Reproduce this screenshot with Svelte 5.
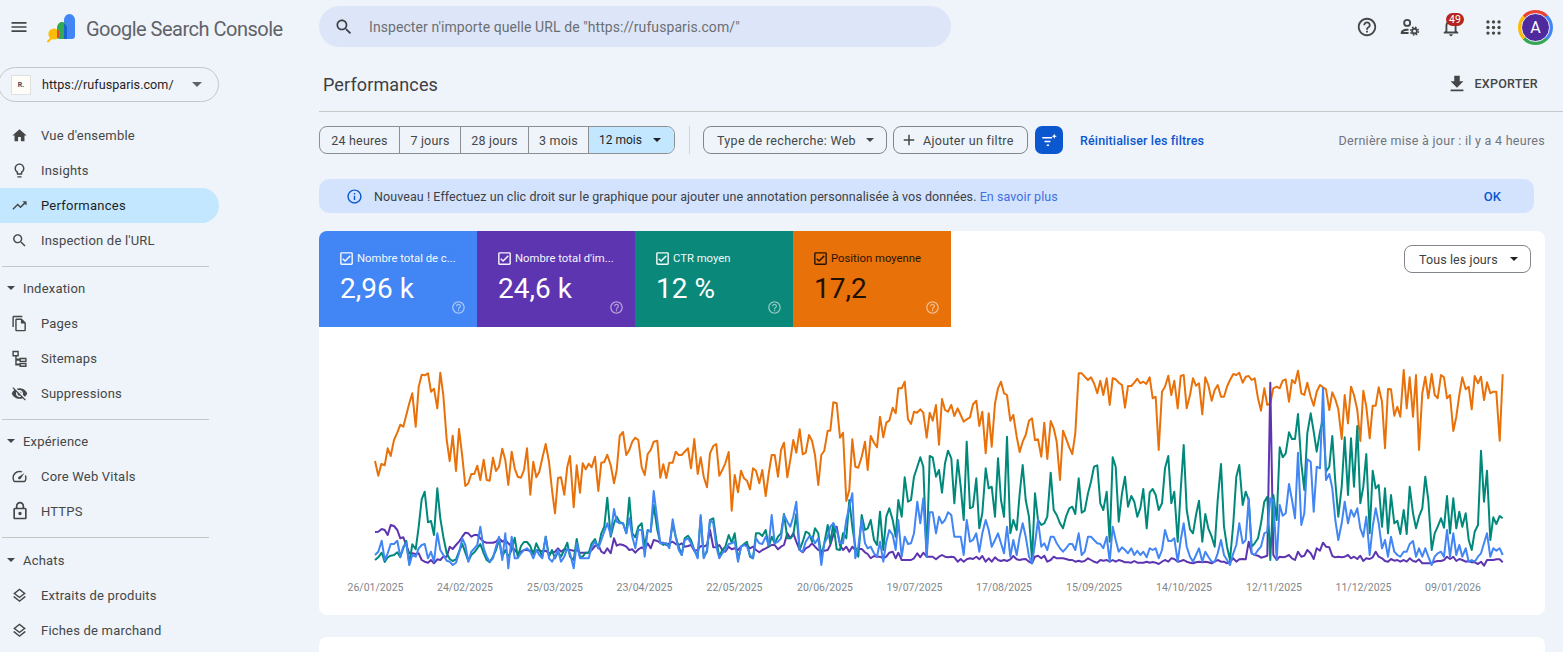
<script>
  const P = {
    orange: [
      `105,303 115,347 124,312 134,316 143,265 152,288 162,240 172,218 181,194 190,200 199,165 208,130 217,100 227,200 236,80 245,44 254,46 264,40 273,95 282,86 292,145 301,38 310,105 320,240 329,303 338,227 348,333 357,207 367,290 376,378 385,370 394,342 403,342 412,317 421,360 431,299 440,360 449,362 459,293 468,333 477,320 487,266 496,300 505,375 515,275 524,325 533,350 543,353 552,330 561,265 571,404 580,305 589,352 598,335 607,295 617,252 627,305 636,390 645,460 654,354 663,352 673,404 682,320 690,288 701,442 710,316 720,398 728,310 737,328 746,311 755,322 765,290 775,393 784,308 793,306 802,284 812,315 822,370 830,330 839,228 849,216 859,285 868,270 877,245 886,233 895,240 905,322 914,345 923,282 932,270 941,245 952,242 961,353 970,313 979,354 988,308 998,308 1007,275 1016,285 1025,285 1034,275 1044,265 1053,325 1063,237 1073,342 1082,292 1091,350 1101,382 1110,280 1120,258 1129,252 1138,347 1147,330 1156,310 1166,276 1175,452 1184,345 1194,397`,
      `33,332 42,355 51,362 60,388 69,325 78,332 88,370 97,330 107,408 116,340 125,285 134,285 144,350 153,270 162,248 172,352 181,300 190,240 199,278 209,208 218,283 227,278 237,225 246,242 255,285 265,375 274,285 283,272 293,212 301,212 310,127 320,130 330,233 339,218 349,423 358,390 367,238 376,320 385,323 395,290 405,245 413,330 422,228 432,248 441,262 450,170 460,232 469,188 478,182 488,143 497,160 505,85 515,85 524,65 534,178 543,192 552,155 562,158 571,148 580,158 590,233 599,158 608,182 618,135 627,254 636,117 645,150 654,155 664,135 673,168 683,145 692,165 701,185 710,178 720,172 729,133 739,122 748,198 757,155 767,280 776,160 785,260 795,130 804,85 813,65 822,100 831,105 841,182 850,165 860,230 869,276 878,245 887,225 897,182 906,175 915,240 924,238 934,290 943,188 952,297 962,183 971,205 980,245 990,360 999,212 1008,235 1018,262 1027,282 1036,220 1046,40 1055,40 1064,50 1074,60 1083,52 1092,70 1102,100 1111,62 1120,105 1130,55 1139,135 1148,55 1157,58 1166,68 1176,75 1185,143 1194,78`,
      `34,78 43,68 52,56 61,70 70,65 79,72 89,52 98,115 107,110 116,270 126,95 135,80 145,47 154,105 163,62 173,145 182,48 191,45 200,145 210,105 219,55 228,77 237,70 247,163 256,52 265,75 275,122 284,90 293,75 303,110 312,110 321,80 330,60 340,42 349,45 358,38 368,68 377,50 386,48 395,60 404,55 414,115 423,152 433,85 442,135 451,130 460,85 470,80 479,85 488,62 497,58 507,125 516,60 525,70 534,32 544,100 553,105 562,68 572,110 581,137 590,95 600,75 609,82 618,88 628,150 637,97 646,118 655,148 665,237 674,105 684,190 693,80 702,105 712,150 721,243 730,92 739,140 749,235 758,137 767,137 776,82 786,125 795,265 804,87 813,88 823,167 832,140 841,170 851,30 860,145 869,52 879,170 888,45 897,270 907,100 916,50 925,115 935,42 944,105 953,115 963,45 972,52 981,115 990,105 1000,213 1009,170 1018,105 1027,52 1037,88 1046,80 1055,148 1064,48 1074,70 1083,50 1092,120 1101,67 1111,100 1120,95 1129,95 1139,242 1148,43`
    ],
    purple: [
      `105,516 115,515 125,507 134,510 143,525 152,495 162,498 172,510 181,535 190,532 199,555 208,580 217,580 227,582 236,580 245,600 254,605 264,608 273,600 282,610 292,598 301,600 310,590 320,590 329,560 338,567 348,555 357,545 367,530 376,518 385,520 394,530 403,525 412,525 421,535 431,545 440,548 449,548 459,548 468,545 477,535 487,545 496,540 505,550 515,560 524,570 533,580 543,575 552,570 561,570 571,572 580,575 589,572 598,570 607,575 617,572 627,580 636,578 645,575 654,565 663,575 673,568 682,570 690,570 701,572 710,570 720,578 728,578 737,578 746,578 755,570 765,558 775,555 784,575 793,580 802,565 812,580 822,535 830,557 839,553 849,555 859,560 868,570 877,568 886,578 895,568 905,562 914,568 923,550 932,565 941,540 952,543 961,548 970,548 979,555 988,550 998,545 1007,552 1016,555 1025,550 1034,560 1044,558 1053,555 1063,572 1073,570 1082,558 1091,560 1101,555 1110,510 1120,562 1129,562 1138,555 1147,570 1156,575 1166,560 1175,568 1184,565 1194,570`,
      `33,560 42,555 51,555 60,565 69,560 78,570 88,577 97,570 107,565 116,560 125,555 134,555 144,568 153,560 162,555 172,520 181,535 190,520 199,545 209,570 218,577 227,565 237,560 246,550 255,560 265,570 274,572 283,572 293,570 301,555 310,525 320,500 330,555 339,570 349,560 358,575 367,560 376,570 385,567 395,567 405,577 413,582 422,595 432,588 441,590 450,590 460,595 469,590 478,578 488,575 497,595 505,578 515,600 524,600 534,600 543,600 552,595 562,580 571,592 580,578 590,590 599,590 608,590 618,598 627,590 636,585 645,590 654,592 664,590 673,592 683,605 692,597 701,605 710,598 720,595 729,597 739,590 748,598 757,588 767,605 776,595 785,605 795,592 804,600 813,603 822,600 831,603 841,598 850,588 860,598 869,600 878,598 887,597 897,605 906,610 915,590 924,587 934,595 943,587 952,605 962,600 971,590 980,595 990,595 999,595 1008,597 1018,600 1027,600 1036,605 1046,602 1055,605 1064,603 1074,595 1083,600 1092,605 1102,608 1111,600 1120,602 1130,600 1139,605 1148,600 1157,605 1166,600 1176,603 1185,607 1194,607`,
      `34,608 43,603 52,608 61,608 70,608 80,605 89,608 98,606 107,608 116,612 126,605 135,600 145,605 154,595 163,597 173,605 182,603 191,600 200,605 210,608 219,610 228,607 237,605 247,607 256,605 265,607 275,610 284,605 293,600 303,605 312,605 321,610 330,605 340,595 349,605 358,598 368,597 377,598 386,545 395,580 404,585 414,587 423,593 433,590 442,587 451,68 460,585 470,600 479,590 488,592 497,590 507,585 516,595 525,600 534,575 544,590 553,587 562,570 572,580 581,597 590,565 600,572 609,548 618,560 628,562 637,588 646,592 655,590 665,592 674,590 684,585 693,595 702,590 712,597 721,587 730,603 739,595 749,597 758,592 767,575 776,590 786,595 795,603 804,605 813,597 823,602 832,600 841,605 851,600 860,605 869,595 879,603 888,605 897,598 907,610 916,610 925,610 935,610 944,605 953,603 963,603 972,600 981,590 990,597 1000,590 1009,603 1018,597 1027,600 1037,605 1046,603 1055,607 1064,607 1074,612 1083,605 1092,617 1101,600 1111,600 1120,600 1129,598 1139,598 1148,607`
    ],
    green: [
      `105,600 115,592 125,578 134,606 143,592 152,587 162,585 172,577 181,592 190,565 199,543 208,612 217,553 227,568 236,500 245,418 254,395 264,487 273,483 282,525 292,385 301,475 310,530 320,580 329,597 338,603 348,598 357,575 367,552 376,578 385,603 394,585 403,577 412,565 421,552 431,580 440,600 449,607 459,590 468,570 477,540 487,590 496,570 505,590 515,570 524,533 533,590 543,558 552,546 561,546 571,558 580,583 589,550 598,570 607,590 617,530 627,590 636,570 645,595 654,575 663,590 673,570 682,548 690,590 701,600 710,537 720,590 728,590 737,578 746,578 755,550 765,537 775,565 784,520 793,500 802,413 812,530 822,490 830,470 839,487 849,490 859,520 868,413 877,520 886,532 895,500 905,490 914,560 923,510 932,515 941,435 952,510 961,548 970,555 979,550 988,560 998,490 1007,530 1016,560 1025,585 1034,535 1044,527 1053,540 1063,570 1073,590 1082,470 1091,590 1101,575 1110,480 1120,475 1129,540 1138,590 1147,570 1156,560 1166,525 1175,548 1184,520 1194,600`,
      `33,560 42,552 51,545 60,590 69,595 78,520 88,520 97,528 107,510 116,560 125,530 134,550 144,530 153,520 162,462 172,535 181,535 190,525 199,462 209,570 218,545 227,515 237,520 246,545 255,505 265,520 274,590 283,550 293,495 301,550 310,490 320,568 330,570 339,520 349,535 358,420 367,500 376,560 385,590 395,465 405,510 413,505 422,480 432,540 441,555 450,455 460,570 469,470 478,445 488,480 497,530 505,420 515,470 524,352 534,425 543,420 552,350 562,320 571,292 580,320 590,590 599,288 608,292 618,350 627,330 636,398 645,310 654,272 664,295 673,430 683,300 692,380 701,480 710,245 720,445 729,440 739,355 748,505 757,460 767,325 776,385 785,380 795,470 804,295 813,420 822,470 831,230 841,520 850,480 860,510 869,400 878,315 887,420 897,470 906,600 915,400 924,480 934,495 943,490 952,470 962,338 971,450 980,465 990,490 999,505 1008,470 1018,445 1027,440 1036,462 1046,355 1055,458 1064,452 1074,400 1083,365 1092,320 1102,316 1111,430 1120,450 1130,395 1139,545 1148,292 1157,320 1166,485 1176,400 1185,350 1194,440`,
      `34,408 43,425 52,470 61,445 70,387 80,505 89,397 98,387 107,405 116,450 126,430 135,325 145,288 154,430 163,395 173,545 182,390 191,255 200,450 210,508 219,520 228,465 237,422 247,545 256,462 265,505 275,530 284,560 293,420 303,312 312,500 321,560 330,600 340,490 349,350 358,315 368,435 377,395 386,420 395,560 404,550 414,535 423,490 433,425 442,410 451,600 460,405 470,480 479,262 488,292 497,280 507,217 516,237 525,237 534,162 544,310 553,390 562,220 572,160 581,215 590,275 600,215 609,175 618,335 628,320 637,228 646,365 655,470 665,380 674,232 684,405 693,235 702,380 712,198 721,430 730,380 739,282 749,520 758,332 767,385 776,375 786,500 795,385 804,520 813,405 823,490 832,482 841,522 851,450 860,522 869,380 879,460 888,505 897,470 907,445 916,350 925,420 935,570 944,520 953,500 963,475 972,503 981,408 990,520 1000,415 1009,505 1018,455 1027,500 1037,460 1046,540 1055,570 1064,515 1074,495 1083,272 1092,425 1101,332 1111,540 1120,472 1129,492 1139,468 1148,475`
    ],
    blue: [
      `105,585 115,575 125,542 134,600 143,580 152,552 162,552 172,542 181,590 190,560 199,550 208,615 217,585 227,590 236,565 245,555 254,552 264,595 273,575 282,605 292,520 301,570 310,585 320,602 329,605 338,615 348,608 357,580 367,535 376,555 385,605 394,575 403,565 412,555 421,500 431,565 440,590 449,605 459,595 468,560 477,530 487,600 496,520 505,625 515,530 524,595 533,595 543,580 552,570 561,565 571,575 580,595 589,570 598,585 607,595 617,530 627,595 636,605 645,590 654,570 663,605 673,590 682,565 690,580 701,625 710,550 720,595 728,595 737,595 746,595 755,560 765,545 775,565 784,540 793,515 802,490 812,525 822,447 830,485 839,490 849,490 859,520 868,475 877,530 886,565 895,510 905,510 914,590 923,510 932,515 941,393 952,480 961,550 970,550 979,550 988,565 998,478 1007,530 1016,570 1025,585 1034,540 1044,535 1053,550 1063,570 1073,595 1082,465 1091,595 1101,570 1110,480 1120,490 1129,560 1138,595 1147,580 1156,570 1166,552 1175,550 1184,545 1194,605`,
      `33,560 42,555 51,560 60,585 69,595 78,535 88,550 97,552 107,530 116,555 125,465 134,550 144,545 153,535 162,465 172,485 181,500 190,470 199,425 209,570 218,575 227,545 237,530 246,530 255,550 265,535 274,615 283,550 293,530 301,500 310,490 320,510 330,550 339,550 349,480 358,440 367,400 376,595 385,560 395,480 405,550 413,565 422,560 432,580 441,590 450,545 460,605 469,545 478,510 488,525 497,570 505,480 515,590 524,530 534,552 543,550 552,520 562,425 571,490 580,415 590,590 599,457 608,457 618,520 627,470 636,490 645,480 654,457 664,465 673,530 683,530 692,530 701,585 710,480 720,545 729,540 739,520 748,575 757,520 767,480 776,510 785,560 795,540 804,520 813,550 822,580 831,500 841,590 850,540 860,585 869,530 878,490 887,530 897,590 906,610 915,550 924,480 934,560 943,550 952,570 962,530 971,530 980,550 990,565 999,575 1008,565 1018,552 1027,552 1036,570 1046,520 1055,585 1064,575 1074,530 1083,530 1092,540 1102,550 1111,552 1120,565 1130,530 1139,605 1148,500 1157,540 1166,575 1176,562 1185,570 1194,580`,
      `34,565 43,585 52,572 61,585 70,575 80,592 89,565 98,570 107,565 116,595 126,570 135,510 145,543 154,543 163,535 173,605 182,540 191,490 200,560 210,590 219,605 228,585 237,565 247,605 256,575 265,590 275,605 284,605 293,580 303,540 312,585 321,600 330,615 340,580 349,555 358,490 368,550 377,540 386,415 395,580 404,585 414,570 423,560 433,520 442,515 451,415 460,420 470,600 479,435 488,467 497,460 507,372 516,420 525,475 534,278 544,495 553,460 562,298 572,305 581,455 590,320 600,325 609,85 618,360 628,342 637,385 646,480 655,540 665,490 674,425 684,490 693,450 702,470 712,445 721,505 730,530 739,470 749,585 758,500 767,445 776,490 786,565 795,540 804,590 813,530 823,575 832,585 841,590 851,575 860,575 869,552 879,543 888,590 897,565 907,590 916,565 925,590 935,615 944,590 953,580 963,575 972,590 981,510 990,590 1000,520 1009,585 1018,555 1027,590 1037,565 1046,605 1055,600 1064,605 1074,590 1083,580 1092,550 1101,520 1111,590 1120,565 1129,572 1139,565 1148,585`
    ]
  };
  const ORIGIN = [340, 730, 1120];
  function line(panels) {
    return panels.map((s, i) => s.split(' ').map((p) => {
      const [x, y] = p.split(',').map(Number);
      return `${(ORIGIN[i] + x / 3).toFixed(1)},${(360 + y / 3).toFixed(1)}`;
    }).join(' ')).join(' ');
  }
  const series = [
    { c: '#e8710a', pts: line(P.orange) },
    { c: '#5e35b1', pts: line(P.purple) },
    { c: '#00897b', pts: line(P.green) },
    { c: '#4285f4', pts: line(P.blue) }
  ];
  const dates = [
    ['26/01/2025', 375.5], ['24/02/2025', 465], ['25/03/2025', 555], ['23/04/2025', 644.5], ['22/05/2025', 734.5],
    ['20/06/2025', 825], ['19/07/2025', 914.5], ['17/08/2025', 1004], ['15/09/2025', 1094], ['14/10/2025', 1184],
    ['12/11/2025', 1274], ['11/12/2025', 1363.5], ['09/01/2026', 1453]
  ];
  const I = {
    search: 'M15.5 14h-.79l-.28-.27C15.41 12.59 16 11.11 16 9.5 16 5.91 13.09 3 9.5 3S3 5.91 3 9.5 5.91 16 9.5 16c1.61 0 3.09-.59 4.23-1.57l.27.28v.79l5 4.99L20.49 19l-4.99-5zm-6 0C7.01 14 5 11.99 5 9.5S7.01 5 9.5 5 14 7.01 14 9.5 11.99 14 9.5 14z',
    home: 'M10 20v-6h4v6h5v-8h3L12 3 2 12h3v8z',
    bulb: 'M9 21c0 .55.45 1 1 1h4c.55 0 1-.45 1-1v-1H9v1zm3-19C8.14 2 5 5.14 5 9c0 2.38 1.19 4.47 3 5.74V17c0 .55.45 1 1 1h6c.55 0 1-.45 1-1v-2.26c1.81-1.27 3-3.36 3-5.74 0-3.86-3.14-7-7-7zm2.85 11.1l-.85.6V16h-4v-2.3l-.85-.6C7.8 12.16 7 10.63 7 9c0-2.76 2.24-5 5-5s5 2.24 5 5c0 1.63-.8 3.16-2.15 4.1z',
    trend: 'M16 6l2.29 2.29-4.88 4.88-4-4L2 16.59 3.41 18l6-6 4 4 6.3-6.29L22 12V6z',
    copy: 'M16 1H4c-1.1 0-2 .9-2 2v14h2V3h12V1zm-1 4H8c-1.1 0-2 .9-2 2v14c0 1.1.9 2 2 2h11c1.1 0 2-.9 2-2V11l-6-6zM8 21V7h6v5h5v9H8z',
    sitemap: 'M2 1h9v8H8v3h4v-1h10v6H12v-2H8v4h4v-1h10v6H12v-2H6V9H2V1zm2 2v4h5V3H4zm10 10v2h6v-2h-6zm0 7v2h6v-2h-6z',
    eyeoff: 'M12 7c2.76 0 5 2.24 5 5 0 .65-.13 1.26-.36 1.83l2.92 2.92c1.51-1.26 2.7-2.89 3.43-4.75-1.73-4.39-6-7.5-11-7.5-1.4 0-2.74.25-3.98.7l2.16 2.16C10.74 7.13 11.35 7 12 7zM2 4.27l2.28 2.28.46.46C3.08 8.3 1.78 10.02 1 12c1.73 4.39 6 7.5 11 7.5 1.55 0 3.03-.3 4.38-.84l.42.42L19.73 22 21 20.73 3.27 3 2 4.27zM7.53 9.8l1.55 1.55c-.05.21-.08.43-.08.65 0 1.66 1.34 3 3 3 .22 0 .44-.03.65-.08l1.55 1.55c-.67.33-1.41.53-2.2.53-2.76 0-5-2.24-5-5 0-.79.2-1.53.53-2.2zm4.31-.78l3.15 3.15.02-.16c0-1.66-1.34-3-3-3l-.17.01z',
    speed: 'M12 4C6.5 4 2 8.5 2 14c0 1.8.5 3.6 1.4 5 .4.6 1 1 1.7 1h13.8c.7 0 1.4-.4 1.7-1 .9-1.4 1.4-3.2 1.4-5 0-1.5-.3-2.9-.9-4.2l-1.6 1.6c.3.8.5 1.7.5 2.6 0 1.4-.4 2.8-1.1 4H5.1C4.400 16.800 4 15.400 4 14c0-4.400 3.600-8 8-8 .9 0 1.800.2 2.600.5l1.600-1.600C14.900 4.300 13.500 4 12 4zm-1.400 11.400c.8.8 2 .8 2.800 0L19 7l-8.400 5.600c-.8.8-.8 2 0 2.800z',
    lock: 'M18 8h-1V6c0-2.76-2.24-5-5-5S7 3.24 7 6v2H6c-1.1 0-2 .9-2 2v10c0 1.1.9 2 2 2h12c1.1 0 2-.9 2-2V10c0-1.1-.9-2-2-2zM9 6c0-1.66 1.34-3 3-3s3 1.34 3 3v2H9V6zm9 14H6V10h12v10zm-6-3c1.1 0 2-.9 2-2s-.9-2-2-2-2 .9-2 2 .9 2 2 2z',
    layers: 'M11.99 18.54l-7.37-5.73L3 14.07l9 7 9-7-1.63-1.27-7.38 5.74zM12 16l7.36-5.73L21 9l-9-7-9 7 1.63 1.27L12 16zm0-11.47L17.74 9 12 13.47 6.26 9 12 4.53z',
    help: 'M11 18h2v-2h-2v2zm1-16C6.48 2 2 6.48 2 12s4.48 10 10 10 10-4.48 10-10S17.52 2 12 2zm0 18c-4.41 0-8-3.59-8-8s3.59-8 8-8 8 3.59 8 8-3.59 8-8 8zm0-14c-2.21 0-4 1.79-4 4h2c0-1.1.9-2 2-2s2 .9 2 2c0 2-3 1.75-3 5h2c0-2.25 3-2.5 3-5 0-2.21-1.79-4-4-4z',
    bell: 'M12 22c1.1 0 2-.9 2-2h-4c0 1.1.9 2 2 2zm6-6v-5c0-3.07-1.63-5.64-4.5-6.32V4c0-.83-.67-1.5-1.5-1.5s-1.5.67-1.5 1.5v.68C7.64 5.36 6 7.92 6 11v5l-2 2v1h16v-1l-2-2zm-2 1H8v-6c0-2.48 1.51-4.5 4-4.5s4 2.02 4 4.5v6z',
    download: 'M19 9h-4V3H9v6H5l7 7 7-7zM5 18v2h14v-2H5z',
    info: 'M11 7h2v2h-2zm0 4h2v6h-2zm1-9C6.48 2 2 6.48 2 12s4.48 10 10 10 10-4.48 10-10S17.52 2 12 2zm0 18c-4.41 0-8-3.59-8-8s3.59-8 8-8 8 3.59 8 8-3.59 8-8 8z',
    add: 'M19 13h-6v6h-2v-6H5v-2h6V5h2v6h6v2z',
    check: 'M19 3H5c-1.1 0-2 .9-2 2v14c0 1.1.9 2 2 2h14c1.1 0 2-.9 2-2V5c0-1.1-.9-2-2-2zm0 16H5V5h14v14zM17.99 9l-1.41-1.42-6.59 6.59-2.58-2.57-1.42 1.41 4 3.99z'
  };
  const nav = [
    { items: [['home', "Vue d'ensemble"], ['bulb', 'Insights'], ['trend', 'Performances', true], ['search', "Inspection de l'URL"]] },
    { title: 'Indexation', items: [['copy', 'Pages'], ['sitemap', 'Sitemaps'], ['eyeoff', 'Suppressions']] },
    { title: 'Expérience', items: [['speed', 'Core Web Vitals'], ['lock', 'HTTPS']] },
    { title: 'Achats', items: [['layers', 'Extraits de produits'], ['layers', 'Fiches de marchand']] }
  ];
  const ranges = ['24 heures', '7 jours', '28 jours', '3 mois'];
  const metrics = [
    { cls: 'm-blue', label: 'Nombre total de c...', value: '2,96 k' },
    { cls: 'm-purple', label: "Nombre total d'im...", value: '24,6 k' },
    { cls: 'm-green', label: 'CTR moyen', value: '12 %' },
    { cls: 'm-orange', label: 'Position moyenne', value: '17,2' }
  ];
</script>

<div class="page">
  <header class="topbar">
    <div class="brand">
      <svg class="menu" viewBox="0 0 24 24"><path d="M3 18h18v-2H3v2zm0-5h18v-2H3v2zm0-7v2h18V6H3z" /></svg>
      <svg class="logo" viewBox="48 13 30 30">
        <path d="M65 20c0-3 2.500-6 5.500-6s5.500 3 5.500 6v16c0 1.700-1.300 3-3 3h-8z" fill="#4285f4" />
        <path d="M58 28c0-3.300 2.200-6 5-6s5 2.700 5 6v11h-7c-1.700 0-3-1.300-3-3z" fill="#34a853" />
        <path d="M65 23.500c1.800 1 3 2.800 3 4.500v11h-3z" fill="#1a66d0" />
        <path d="M49 41.500l4-4" stroke="#fbbc04" stroke-width="1.800" stroke-linecap="round" />
        <circle cx="55" cy="34" r="5.600" fill="#fbbc04" />
        <path d="M58 29.200a5.600 5.600 0 0 1 0 9.600z" fill="#ea4335" />
      </svg>
      <span class="brand-name">Google Search Console</span>
    </div>
    <div class="searchbox">
      <svg viewBox="0 0 24 24"><path d={I.search} /></svg>
      <span>Inspecter n'importe quelle URL de "https://rufusparis.com/"</span>
    </div>
    <div class="tools">
      <svg class="tool" viewBox="0 0 24 24"><path d={I.help} /></svg>
      <svg class="tool" viewBox="0 0 24 24">
        <circle cx="10" cy="7.500" r="3.300" fill="none" stroke="#444746" stroke-width="2" />
        <path d="M3 19.500v-1.300c0-2.600 3.800-4.200 7-4.200.6 0 1.200.1 1.700.2l-.4 2c-.4-.1-.9-.2-1.300-.2-2.600 0-5 1.200-5 2.200v-.7h6.500v2z" />
        <circle cx="18" cy="16.500" r="2.600" fill="none" stroke="#444746" stroke-width="2" />
        <circle cx="18" cy="16.500" r="4.300" fill="none" stroke="#444746" stroke-width="1.500" stroke-dasharray="1.800 1.580" />
      </svg>
      <div class="bellwrap">
        <svg class="tool" viewBox="0 0 24 24"><path d={I.bell} /></svg>
        <span class="badge">49</span>
      </div>
      <svg class="tool apps" viewBox="0 0 24 24">
        {#each [5, 12, 19] as y}{#each [5, 12, 19] as x}<circle cx={x} cy={y} r="2.100" />{/each}{/each}
      </svg>
      <div class="avatar"><span>A</span></div>
    </div>
  </header>

  <div class="layout">
    <aside class="side">
      <div class="property">
        <span class="favicon">R.</span>
        <span class="prop-name">https://rufusparis.com/</span>
        <span class="caret"></span>
      </div>
      <nav class="nav">
        {#each nav as group, g}
          {#if g > 0}<hr class="rule" />{/if}
          {#if group.title}
            <div class="group-title"><span class="caret small"></span>{group.title}</div>
          {/if}
          {#each group.items as item}
            <div class="nav-item" class:active={item[2]}>
              <svg class:big={item[0] === 'lock'} viewBox="0 0 24 24"><path d={I[item[0]]} /></svg>
              <span>{item[1]}</span>
            </div>
          {/each}
        {/each}
      </nav>
    </aside>

    <main class="main">
      <div class="titlebar">
        <h1>Performances</h1>
        <button class="export">
          <svg viewBox="0 0 24 24"><path d={I.download} /></svg>
          EXPORTER
        </button>
      </div>

      <div class="filters">
        <div class="ranges">
          {#each ranges as r}<span class="range">{r}</span>{/each}
          <span class="range selected">12 mois<span class="caret small dark"></span></span>
        </div>
        <span class="vsep"></span>
        <span class="chip type">Type de recherche: Web<span class="caret small grey"></span></span>
        <span class="chip addf">
          <svg viewBox="0 0 24 24"><path d={I.add} /></svg>
          Ajouter un filtre
        </span>
        <span class="spark">
          <svg viewBox="0 0 24 24" fill="#fff">
            <path d="M3 8h13v2H3zM6 13h8v2H6zM9 18h3v2H9z" />
            <path d="M19 3.500l1 2.500 2.500 1-2.500 1-1 2.500-1-2.500-2.500-1 2.500-1z" />
          </svg>
        </span>
        <a class="reset" href="#reset">Réinitialiser les filtres</a>
        <span class="updated">Dernière mise à jour : il y a 4 heures</span>
      </div>

      <div class="banner">
        <svg viewBox="0 0 24 24"><path d={I.info} /></svg>
        <span class="banner-text">Nouveau ! Effectuez un clic droit sur le graphique pour ajouter une annotation personnalisée à vos données. <a href="#more">En savoir plus</a></span>
        <span class="ok">OK</span>
      </div>

      <section class="card chart-card">
        <div class="card-head">
          <div class="metrics">
            {#each metrics as m}
              <div class="metric {m.cls}">
                <div class="metric-label">
                  <svg viewBox="0 0 24 24"><path d={I.check} /></svg>
                  <span>{m.label}</span>
                </div>
                <div class="metric-value">{m.value}</div>
                <svg class="metric-help" viewBox="0 0 24 24"><path d={I.help} /></svg>
              </div>
            {/each}
          </div>
          <span class="chip daily">Tous les jours<span class="caret small dark"></span></span>
        </div>
        <svg class="chart" viewBox="319 327 1226 288">
          {#each series as s}
            <polyline points={s.pts} fill="none" stroke={s.c} stroke-width="2" stroke-linejoin="round" />
          {/each}
          {#each dates as d}
            <text x={d[1]} y="591" text-anchor="middle">{d[0]}</text>
          {/each}
        </svg>
      </section>

      <section class="card next-card"></section>
    </main>
  </div>
</div>

<style>
  :global(body) { margin: 0; background: #eff3fa; }
  * { box-sizing: border-box; }
  .page {
    height: 652px; overflow: hidden; background: #eff3fa; color: #444746;
    font-family: Roboto, "Liberation Sans", sans-serif; font-size: 13px;
  }
  svg { display: block; fill: #444746; flex: none; }
  a { text-decoration: none; }

  .topbar { height: 56px; display: flex; align-items: flex-start; }
  .brand { width: 319px; height: 56px; display: flex; align-items: center; flex: none; }
  .menu { width: 20px; height: 20px; margin-left: 9px; margin-right: 18px; margin-top: -3px; }
  .logo { width: 30px; height: 30px; }
  .brand-name { margin-left: 9px; font-size: 20px; color: #5f6368; letter-spacing: -0.5px; margin-top: 2px; white-space: nowrap; }
  .searchbox {
    width: 632px; height: 41px; margin-top: 6px; border-radius: 21px; background: #dde6f8;
    display: flex; align-items: center; padding-left: 15px; color: #6b6f73; font-size: 14px; letter-spacing: .08px;
  }
  .searchbox svg { width: 20px; height: 20px; margin-right: 15px; fill: #3c4043; }
  .tools { margin-left: auto; display: flex; align-items: center; height: 54px; padding-right: 10px; }
  .tool { width: 22px; height: 22px; }
  .tools > .tool:first-child { margin-right: 20px; }
  .tools > .tool:nth-child(2) { margin-right: 20px; }
  .bellwrap { position: relative; width: 22px; height: 22px; margin-right: 22px; }
  .badge {
    position: absolute; left: 6px; top: -3px; width: 18px; height: 13px; border-radius: 7px;
    background: #b3261e; color: #fff; font-size: 10.500px; line-height: 13px; text-align: center;
  }
  .apps { width: 19px; height: 19px; margin-right: 15px; }
  .avatar {
    width: 35px; height: 35px; border-radius: 50%; padding: 3px;
    background: conic-gradient(#ea4335 0 25%, #4285f4 25% 50%, #34a853 50% 75%, #fbbc04 75% 100%);
    transform: rotate(-45deg) ; display: flex;
  }
  .avatar span {
    flex: 1; border-radius: 50%; background: #4e2a9e; border: 1.500px solid #eff3fa; color: #fff;
    font-size: 16px; display: flex; align-items: center; justify-content: center; transform: rotate(45deg);
  }

  .layout { display: flex; }
  .side { width: 319px; flex: none; padding-top: 11px; }
  .property {
    width: 221px; height: 35px; margin-left: -2px; border: 1px solid #c4c7c5; border-radius: 18px;
    display: flex; align-items: center; padding-left: 12px; color: #1f1f1f;
  }
  .favicon {
    width: 20px; height: 20px; background: #fffdf8; border: 1px solid #e0e0e0; color: #3c4a63;
    font-size: 7px; font-weight: 700; display: flex; align-items: center; justify-content: center; flex: none;
  }
  .prop-name { margin-left: 11px; font-size: 12.600px; letter-spacing: .03px; }
  .caret {
    width: 0; height: 0; border-left: 5px solid transparent; border-right: 5px solid transparent;
    border-top: 5px solid #5f6368; margin-left: auto; margin-right: 16px;
  }
  .caret.small { border-left-width: 4px; border-right-width: 4px; border-top-width: 4px; display: inline-block; vertical-align: middle; }
  .caret.dark { border-top-color: #1f1f1f; }
  .caret.grey { border-top-color: #444746; }

  .nav { margin-top: 15.500px; width: 219px; }
  .nav-item {
    height: 35px; display: flex; align-items: center; padding-left: 11px; border-radius: 0 18px 18px 0;
    color: #444746; letter-spacing: .2px;
  }
  .nav-item svg { width: 17px; height: 17px; margin-right: 13px; }
  .nav-item svg.big { width: 20px; height: 20px; margin-left: -1.500px; margin-right: 11.500px; }
  .nav-item.active { background: #c2e7ff; color: #1f1f1f; letter-spacing: .25px; }
  .group-title { height: 35px; display: flex; align-items: center; padding-left: 7px; letter-spacing: .2px; color: #444746; }
  .group-title .caret { margin: 0 8px 0 0; border-top-color: #444746; }
  .rule { border: 0; height: 1px; background: #c4c7c5; margin: 8px 0 4px 2px; width: 207px; }
  .rule:nth-of-type(3) { margin-bottom: 5px; }

  .main { flex: 1; min-width: 0; padding-right: 18px; }
  .titlebar {
    height: 56px; margin-right: -18px; border-bottom: 1px solid #c7c9cb; padding: 2px 25px 0 4px;
    display: flex; align-items: center; justify-content: space-between;
  }
  h1 { margin: 0; font-size: 18px; font-weight: 400; color: #3c4043; letter-spacing: .13px; }
  .export {
    border: 0; background: none; padding: 0; display: flex; align-items: center; gap: 6.500px; margin-top: -2px;
    font: 500 12.500px Roboto, sans-serif; letter-spacing: .25px; color: #444746;
  }
  .export svg { width: 22px; height: 22px; }

  .filters { display: flex; align-items: center; margin-top: 14px; height: 28px; font-size: 12.500px; }
  .ranges { display: flex; height: 28px; border: 1px solid #8b8f92; border-radius: 8px; overflow: hidden; }
  .range { display: flex; align-items: center; justify-content: center; border-left: 1px solid #8b8f92; color: #444746; letter-spacing: .2px; }
  .range:first-child { border-left: 0; }
  .range:nth-child(1) { width: 79px; }
  .range:nth-child(2) { width: 61px; }
  .range:nth-child(3) { width: 68px; }
  .range:nth-child(4) { width: 60px; }
  .range.selected { width: 86px; background: #c2e7ff; color: #1f1f1f; justify-content: flex-start; padding-left: 10px; font-size: 12px; letter-spacing: 0; }
  .range.selected .caret { margin: 0 0 0 11px; }
  .vsep { width: 1px; height: 28px; background: #d3d6da; margin: 0 13px 0 14px; }
  .chip {
    height: 28px; display: inline-flex; align-items: center; border: 1px solid #80868b; border-radius: 8px;
    color: #444746; letter-spacing: .31px; white-space: nowrap;
  }
  .type { width: 184px; padding-left: 13px; }
  .type .caret { margin: 0 0 0 10px; }
  .addf { width: 135px; margin-left: 6px; padding-left: 6px; }
  .addf svg { width: 18px; height: 18px; margin-right: 5px; }
  .spark { width: 28px; height: 28px; margin-left: 7px; border-radius: 7px; background: #0b57d0; display: flex; align-items: center; justify-content: center; }
  .spark svg { width: 18px; height: 18px; fill: #fff; }
  .reset { margin-left: 17px; color: #0b57d0; font-weight: 500; letter-spacing: .13px; }
  .updated { margin-left: auto; color: #70757a; letter-spacing: .28px; }

  .banner {
    margin-top: 25px; margin-right: 11px; height: 34px; border-radius: 10px; background: #d3e3fd;
    display: flex; align-items: center; padding: 0 33px 0 27px; color: #3c4043;
  }
  .banner svg { width: 17px; height: 17px; fill: #0b57d0; margin-right: 11px; }
  .banner-text { font-size: 12.500px; letter-spacing: .07px; }
  .banner-text a { color: #3f6fe0; }
  .ok { margin-left: auto; color: #0b57d0; font-weight: 500; }

  .card { background: #fff; border-radius: 8px; }
  .chart-card { margin-top: 18px; height: 384px; overflow: hidden; }
  .card-head { display: flex; justify-content: space-between; align-items: flex-start; height: 96px; }
  .metrics { display: flex; }
  .metric { width: 158px; height: 96px; padding: 19px 8px 0 21px; color: #fff; position: relative; }
  .m-blue { background: #4285f4; }
  .m-purple { background: #5e35b1; }
  .m-green { background: #0a897a; }
  .m-orange { background: #e8710a; color: #201000; }
  .metric-label { display: flex; align-items: center; gap: 2.500px; font-size: 11.300px; white-space: nowrap; opacity: .95; }
  .metric-label svg { width: 17px; height: 17px; fill: currentColor; margin-left: -2.500px; }
  .metric-value { font-size: 28px; line-height: 32px; margin-top: 6px; font-weight: 400; }
  .metric-help { position: absolute; right: 11px; bottom: 12px; width: 15px; height: 15px; fill: #fff; opacity: .55; }
  .daily { margin: 14px 14px 0 0; width: 127px; padding-left: 14px; background: #fff; color: #3c4043; letter-spacing: .1px; font-size: 12.500px; }
  .daily .caret { margin: 0 0 0 12px; }
  .chart { width: 1226px; height: 288px; }
  .chart text { font-size: 10.500px; fill: #80868b; font-family: Roboto, sans-serif; }
  .next-card { margin-top: 22px; height: 100px; }
</style>
